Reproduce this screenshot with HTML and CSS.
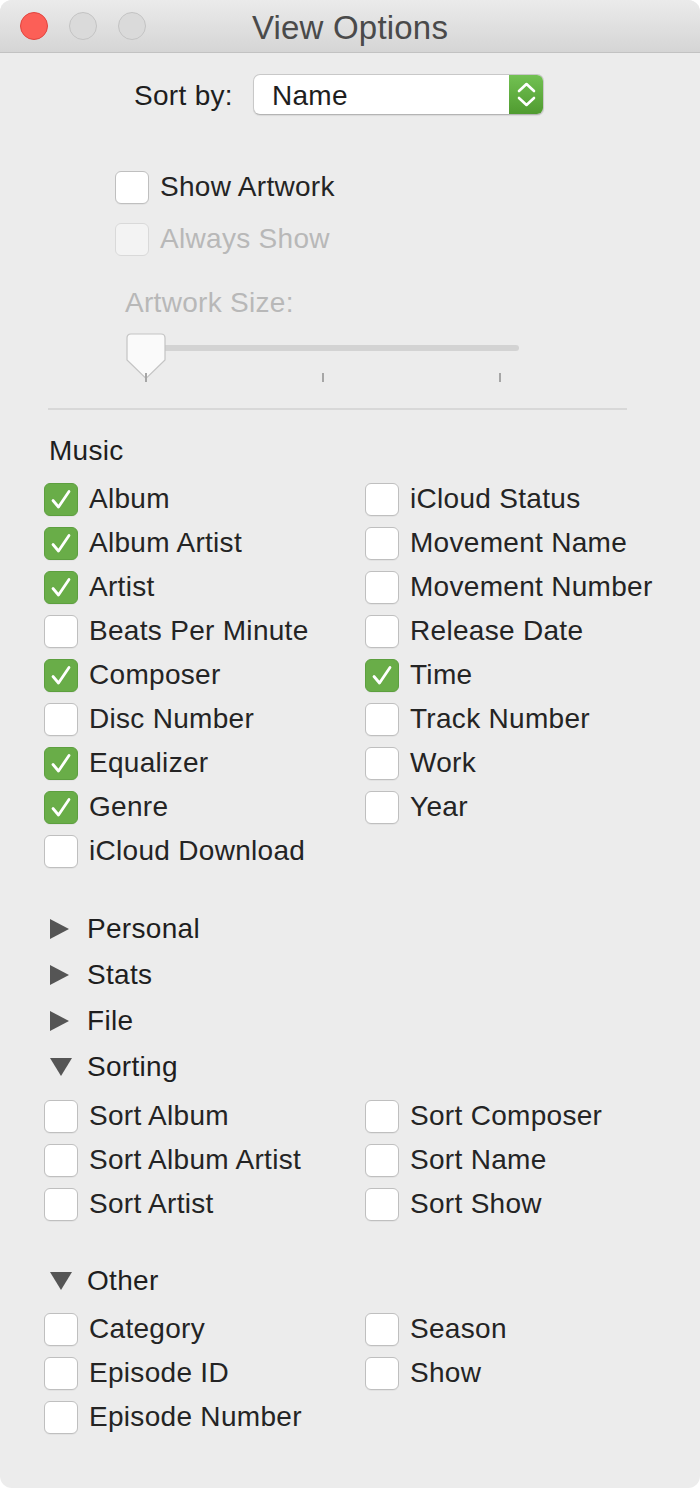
FILE: index.html
```html
<!DOCTYPE html>
<html>
<head>
<meta charset="utf-8">
<title>View Options</title>
<link rel="stylesheet" href="styles.css">
</head>
<body>
<div class="window">
  <div class="titlebar">
    <div class="lights">
      <span class="light red"></span>
      <span class="light"></span>
      <span class="light"></span>
    </div>
    <div class="title">View Options</div>
  </div>

  <div class="content">
    <div class="sortrow">
      <span class="sortlabel">Sort by:</span>
      <div class="popup">
        <span class="popup-text">Name</span>
        <span class="popup-arrows">
          <svg width="35" height="41" viewBox="0 0 35 41"><path d="M10 17 L17.5 10 L25 17 M10 24 L17.5 31 L25 24" fill="none" stroke="#fff" stroke-width="2.6" stroke-linecap="round" stroke-linejoin="round"/></svg>
        </span>
      </div>
    </div>

    <div class="artwork">
      <div class="row"><span class="box"></span><span class="label">Show Artwork</span></div>
      <div class="row disabled"><span class="box"></span><span class="label">Always Show</span></div>
      <div class="sizelabel">Artwork Size:</div>
      <div class="slider">
        <div class="track"></div>
        <svg class="knob" width="40" height="47" viewBox="0 0 40 47"><path d="M5 1 H35 Q39 1 39 5 V27 L20 45.5 L1 27 V5 Q1 1 5 1 Z" fill="#fafafa" stroke="#c4c4c4" stroke-width="1.2"/></svg>
        <div class="ticks"><span class="tick"></span><span class="tick"></span><span class="tick"></span></div>
      </div>
    </div>

    <div class="sep"></div>

    <div class="header">Music</div>
    <div class="grid rows9">
      <div class="row"><span class="box on"></span><span class="label">Album</span></div>
      <div class="row"><span class="box on"></span><span class="label">Album Artist</span></div>
      <div class="row"><span class="box on"></span><span class="label">Artist</span></div>
      <div class="row"><span class="box"></span><span class="label">Beats Per Minute</span></div>
      <div class="row"><span class="box on"></span><span class="label">Composer</span></div>
      <div class="row"><span class="box"></span><span class="label">Disc Number</span></div>
      <div class="row"><span class="box on"></span><span class="label">Equalizer</span></div>
      <div class="row"><span class="box on"></span><span class="label">Genre</span></div>
      <div class="row"><span class="box"></span><span class="label">iCloud Download</span></div>
      <div class="row"><span class="box"></span><span class="label">iCloud Status</span></div>
      <div class="row"><span class="box"></span><span class="label">Movement Name</span></div>
      <div class="row"><span class="box"></span><span class="label">Movement Number</span></div>
      <div class="row"><span class="box"></span><span class="label">Release Date</span></div>
      <div class="row"><span class="box on"></span><span class="label">Time</span></div>
      <div class="row"><span class="box"></span><span class="label">Track Number</span></div>
      <div class="row"><span class="box"></span><span class="label">Work</span></div>
      <div class="row"><span class="box"></span><span class="label">Year</span></div>
    </div>

    <div class="disclosures">
      <div class="disc"><span class="tri right"></span><span class="label">Personal</span></div>
      <div class="disc"><span class="tri right"></span><span class="label">Stats</span></div>
      <div class="disc"><span class="tri right"></span><span class="label">File</span></div>
      <div class="disc"><span class="tri down"></span><span class="label">Sorting</span></div>
    </div>
    <div class="grid rows3 sorting">
      <div class="row"><span class="box"></span><span class="label">Sort Album</span></div>
      <div class="row"><span class="box"></span><span class="label">Sort Album Artist</span></div>
      <div class="row"><span class="box"></span><span class="label">Sort Artist</span></div>
      <div class="row"><span class="box"></span><span class="label">Sort Composer</span></div>
      <div class="row"><span class="box"></span><span class="label">Sort Name</span></div>
      <div class="row"><span class="box"></span><span class="label">Sort Show</span></div>
    </div>

    <div class="disc other"><span class="tri down"></span><span class="label">Other</span></div>
    <div class="grid rows3 othergrid">
      <div class="row"><span class="box"></span><span class="label">Category</span></div>
      <div class="row"><span class="box"></span><span class="label">Episode ID</span></div>
      <div class="row"><span class="box"></span><span class="label">Episode Number</span></div>
      <div class="row"><span class="box"></span><span class="label">Season</span></div>
      <div class="row"><span class="box"></span><span class="label">Show</span></div>
    </div>
  </div>
</div>
</body>
</html>
```

FILE: styles.css
```css
* { box-sizing: border-box; }
html, body { margin: 0; padding: 0; background: #ffffff; }
body {
  font-family: "Liberation Sans", Arial, sans-serif;
  font-size: 28px;
  color: #242424;
}
.window {
  width: 700px;
  height: 1488px;
  background: #ececec;
  border-radius: 12px;
  overflow: hidden;
}
.titlebar {
  height: 53px;
  background: linear-gradient(#ebebeb, #d5d5d5);
  border-bottom: 1px solid #c2c2c2;
  display: grid;
  grid-template-columns: 1fr auto 1fr;
  align-items: center;
}
.lights {
  display: flex;
  gap: 21px;
  padding-left: 20px;
}
.light {
  width: 28px;
  height: 28px;
  border-radius: 50%;
  background: #dadada;
  border: 1px solid #c3c3c3;
}
.light.red {
  background: #fc5f57;
  border-color: #e0443e;
}
.title {
  font-size: 33px;
  color: #4a4a4a;
  letter-spacing: 0.2px;
  padding-top: 4px;
}

.sortrow {
  display: flex;
  align-items: center;
  margin-top: 21px;
  padding-left: 134px;
  gap: 20px;
}
.sortlabel { color: #1e1e1e; letter-spacing: 0.3px; padding-top: 3px; }
.popup {
  width: 291px;
  height: 41px;
  background: #ffffff;
  border: 1px solid #c8c8c8;
  border-bottom-color: #b4b4b4;
  border-radius: 7px;
  box-shadow: 0 1px 1px rgba(0,0,0,0.08);
  display: flex;
  align-items: center;
  justify-content: space-between;
  overflow: hidden;
}
.popup-text { padding-left: 18px; padding-top: 3px; color: #1e1e1e; letter-spacing: 0.3px; }
.popup-arrows {
  width: 35px;
  height: 41px;
  margin-right: -1px;
  background: linear-gradient(#73c253, #4f9a2f);
  display: flex;
}

.artwork {
  padding-left: 115px;
  margin-top: 50px;
}
.row {
  display: flex;
  align-items: center;
  gap: 11px;
  height: 44px;
  white-space: nowrap;
}
.artwork .row + .row { margin-top: 8px; }
.box {
  flex: none;
  width: 34px;
  height: 33px;
  background: #ffffff;
  border: 1px solid #bfbfbf;
  border-radius: 6px;
  box-shadow: 0 1px 0 rgba(0,0,0,0.04);
}
.box.on {
  background-color: #69ad48;
  border-color: #5d9f3f;
  background-image: url("data:image/svg+xml,%3Csvg xmlns='http://www.w3.org/2000/svg' width='34' height='33' viewBox='0 0 34 33'%3E%3Cpath d='M9 17.5 L14.5 24 L25 8.5' fill='none' stroke='%23ffffff' stroke-width='2.8' stroke-linecap='round' stroke-linejoin='round'/%3E%3C/svg%3E");
  background-repeat: no-repeat;
  background-position: center;
}
.label { letter-spacing: 0.3px; }
.row.disabled .box { background: #f3f3f3; border-color: #d9d9d9; box-shadow: none; }
.row.disabled .label { color: #b8b8b8; }

.sizelabel {
  margin-top: 27px;
  padding-left: 10px;
  height: 30px;
  line-height: 30px;
  color: #b8b8b8;
  letter-spacing: 0.3px;
}
.slider {
  position: relative;
  margin-top: 13px;
  margin-left: 11px;
  width: 393px;
  height: 55px;
}
.track {
  position: absolute;
  left: 18px;
  top: 14px;
  width: 375px;
  height: 6px;
  border-radius: 3px;
  background: #d3d3d3;
}
.knob {
  position: absolute;
  left: 0;
  top: 2px;
}
.ticks {
  position: absolute;
  left: 19px;
  top: 42px;
  width: 356px;
  display: flex;
  justify-content: space-between;
}
.tick {
  width: 2px;
  height: 9px;
  background: #a6a6a6;
}

.sep {
  margin: 22px 73px 0 48px;
  height: 2px;
  background: #d8d8d8;
}

.header {
  margin-top: 26px;
  padding-left: 49px;
  height: 30px;
  line-height: 30px;
  color: #1e1e1e;
  letter-spacing: 0.3px;
}
.grid {
  display: grid;
  grid-auto-flow: column;
  grid-template-columns: 321px 1fr;
  padding-left: 44px;
}
.grid.rows9 { grid-template-rows: repeat(9, 44px); margin-top: 11px; }
.grid.rows3 { grid-template-rows: repeat(3, 44px); }
.grid.sorting { margin-top: 4px; }
.grid.othergrid { margin-top: 3px; }

.disclosures { margin-top: 33px; }
.disc {
  display: flex;
  align-items: center;
  height: 46px;
  padding-left: 50px;
  color: #1e1e1e;
}
.disc .label { margin-left: 18px; }
.disc.other { margin-top: 32px; }
.tri {
  flex: none;
  width: 19px;
  height: 20px;
  background: #555555;
}
.tri.right { clip-path: polygon(0 0, 100% 50%, 0 100%); }
.tri.down {
  width: 22px;
  height: 18px;
  margin-right: -3px;
  clip-path: polygon(0 0, 100% 0, 50% 100%);
}
```
